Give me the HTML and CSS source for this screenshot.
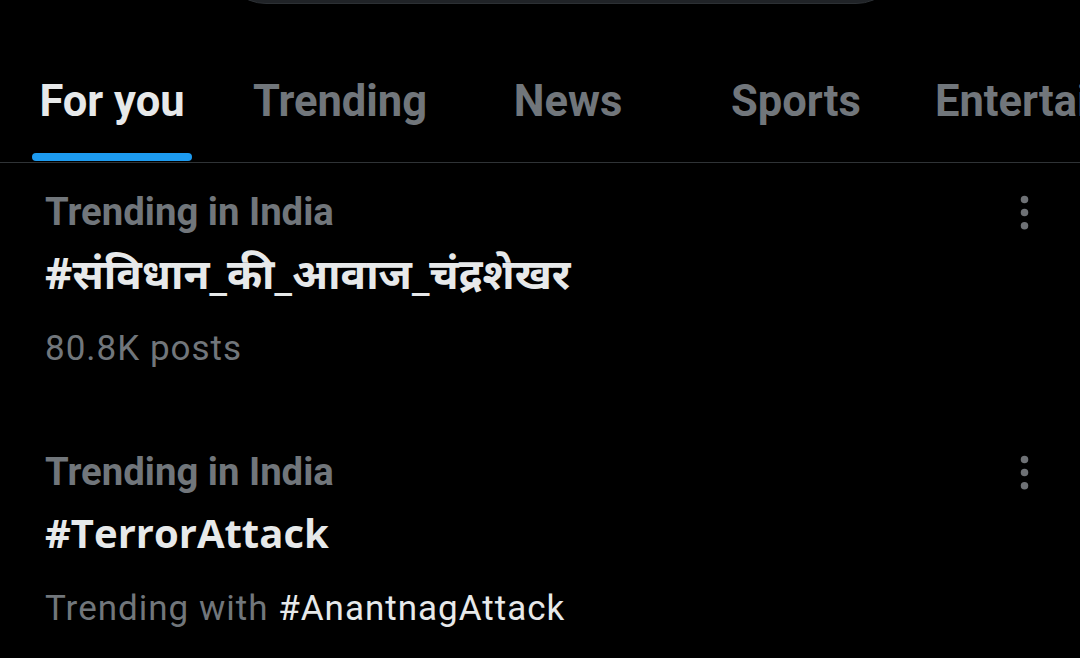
FILE: index.html
```html
<!DOCTYPE html>
<html lang="en">
<head>
<meta charset="utf-8">
<title>Explore</title>
<link rel="stylesheet" href="styles.css">
</head>
<body>
<div class="app">
  <div class="search-wrap"><div class="search"></div></div>
  <nav class="tabs">
    <div class="tab active"><span class="tab-inner"><span class="tab-text">For you</span><span class="bar"></span></span></div>
    <div class="tab"><span class="tab-inner"><span class="tab-text">Trending</span></span></div>
    <div class="tab"><span class="tab-inner"><span class="tab-text">News</span></span></div>
    <div class="tab"><span class="tab-inner"><span class="tab-text">Sports</span></span></div>
    <div class="tab"><span class="tab-inner"><span class="tab-text">Entertainment</span></span></div>
  </nav>
  <section class="trends">
    <article class="trend">
      <div class="trend-body">
        <div class="trend-label">Trending in India</div>
        <div class="trend-tag hi" lang="hi">#संविधान_की_आवाज_चंद्रशेखर</div>
        <div class="trend-meta">80.8K posts</div>
      </div>
      <svg class="more" viewBox="0 0 24 24" aria-hidden="true"><circle cx="12" cy="5" r="2"/><circle cx="12" cy="12" r="2"/><circle cx="12" cy="19" r="2"/></svg>
    </article>
    <article class="trend">
      <div class="trend-body">
        <div class="trend-label">Trending in India</div>
        <div class="trend-tag">#TerrorAttack</div>
        <div class="trend-meta">Trending with <span class="with">#AnantnagAttack</span></div>
      </div>
      <svg class="more" viewBox="0 0 24 24" aria-hidden="true"><circle cx="12" cy="5" r="2"/><circle cx="12" cy="12" r="2"/><circle cx="12" cy="19" r="2"/></svg>
    </article>
  </section>
</div>
</body>
</html>
```
FILE: styles.css
```css
* { box-sizing: border-box; }
html, body { margin: 0; padding: 0; background: #000; }
body {
  width: 1080px;
  height: 658px;
  overflow: hidden;
  font-family: Roboto, "Noto Sans", "Noto Sans Devanagari", "DejaVu Sans", sans-serif;
  color: #e7e9ea;
}
.app { width: 1080px; height: 658px; overflow: hidden; }

.search-wrap { height: 4px; overflow: hidden; }
.search {
  width: 680px;
  height: 90px;
  margin-left: 221px;
  margin-top: -86px;
  border-radius: 45px;
  background: #202327;
  border: 1px solid #2c3034;
}

.tabs {
  display: flex;
  border-bottom: 1px solid #2f3336;
  overflow: hidden;
  white-space: nowrap;
}
.tab {
  flex: 0 0 auto;
  min-width: 228px;
  padding: 73px 25px 1px;
  display: flex;
  justify-content: center;
  font-weight: 700;
  font-size: 43.5px;
  line-height: 50px;
  color: #71767b;
}
.tab:first-child { margin-left: -2px; }
.tab.active { color: #e7e9ea; }
.tab-inner { display: flex; flex-direction: column; }
.tab-text { display: block; height: 50px; }
.tab .tab-inner::after { content: ""; display: block; height: 34px; }
.tab.active .tab-inner::after { display: none; }
.bar {
  display: block;
  height: 8px;
  margin: 26px -7px 0;
  border-radius: 4px;
  background: #1d9bf0;
}

.trend {
  height: 260px;
  display: flex;
  justify-content: space-between;
  align-items: flex-start;
  padding: 27px 33px 0 45px;
}
.trend-body { display: flex; flex-direction: column; }
.trend-label {
  font-size: 38.3px;
  line-height: 44px;
  font-weight: 700;
  color: #71767b;
}
.trend-tag {
  margin-top: 4px;
  font-family: "Open Sans", "Noto Sans", sans-serif;
  font-size: 40px;
  line-height: 70px;
  height: 70px;
  font-weight: 700;
  color: #e7e9ea;
}
.trend-tag.hi {
  font-family: "Noto Sans", "Noto Sans Devanagari", "Open Sans", sans-serif;
  font-size: 42.4px;
}
.trend-meta {
  margin-top: 11px;
  font-size: 35px;
  line-height: 60px;
  font-weight: 400;
  color: #71767b;
  letter-spacing: 1px;
}
.trend-meta .with { color: #e7e9ea; }
.more {
  width: 45px;
  height: 45px;
  fill: #6e7175;
  flex: 0 0 auto;
}
```
